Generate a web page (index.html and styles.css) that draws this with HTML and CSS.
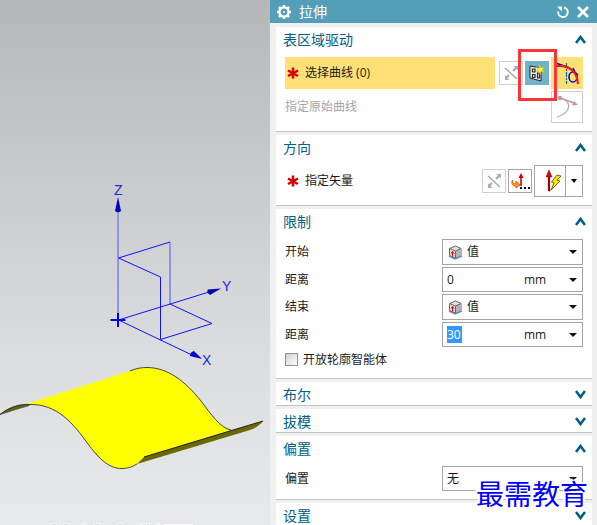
FILE: index.html
```html
<!DOCTYPE html>
<html lang="zh-CN">
<head>
<meta charset="utf-8">
<title>拉伸</title>
<link rel="stylesheet" href="styles.css">
</head>
<body>
<svg class="defs" width="0" height="0" aria-hidden="true">
  <symbol id="up" viewBox="0 0 11 9"><path d="M1 8 5.500 2 10 8" fill="none" stroke="#005f87" stroke-width="2.600"/></symbol>
  <symbol id="down" viewBox="0 0 11 9"><path d="M1 1 5.500 7 10 1" fill="none" stroke="#005f87" stroke-width="2.600"/></symbol>
  <symbol id="star" viewBox="0 0 12 12"><path d="M6 0.500V11.500M1 3.500 11 9M1 9 11 3.500" fill="none" stroke="#d80000" stroke-width="2.500"/></symbol>
  <symbol id="reverse" viewBox="0 0 22 22"><path d="M5 6 17 17" stroke="#a8a8a8" stroke-width="1.500"/><path d="M13 9 16 6M9 13 6 16" stroke="#a9a9cc" stroke-width="2.400"/><path d="M18 4V8.500L13.500 4ZM5 18V13.500L9.500 18Z" fill="#a9a9cc"/></symbol>
  <symbol id="cube" viewBox="0 0 15 15"><path d="M1 11 7 14 14 11" fill="none" stroke="#6b95d8" stroke-width="1.500"/><path d="M1.500 3.500 7.500 1 13 3.500V10.500L7.500 13 1.500 10.500Z" fill="#e2e2e2" stroke="#666"/><path d="M7.500 6 13 3.500V10.500L7.500 13Z" fill="#b4b4b4"/><path d="M1.500 3.500 7.500 6 13 3.500M7.500 6V13" fill="none" stroke="#666"/><path d="M4.500 11.500V6.500M3 8.500 4.500 6.500 6 8.500" fill="none" stroke="#e00000"/></symbol>
</svg>
<main class="app">
  <div class="viewport">
    <svg class="scene" viewBox="0 0 270 525" role="img" aria-label="坐标系与曲面">
      <path d="M0 414.500C9 407 20 403.500 30 404.500L28 406C20 408 8 412 0 414.500Z" fill="#6b6800" stroke="#333" stroke-width=".6"/>
      <path d="M26 404 130 371C137 368 142 367.500 148 367.500C168 368 185 381 201 401C211 414 220 428 231 430L144 457C137 464 132 468 122 468.500C108 469 97 456 88 444C73 423 57 403 26 404Z" fill="#ff0"/>
      <path d="M130 371C137 368 142 367.500 148 367.500C168 368 185 381 201 401C211 414 220 428 231 430M0 414.500C10 407 20 404.500 30 404.500C57 404 73 423 88 444C97 456 108 469 122 468.500C130 468.500 135 465 137 464" fill="none" stroke="#333" stroke-width=".9"/>
      <path d="M144 457 263 421C260 425 256 428 250 430L137 464Z" fill="#6b6800"/>
      <path d="M144 457 263 421" stroke="#222"/>
      <path d="M118 320V211" stroke="#9292f2" stroke-width="2"/>
      <path d="M170 304V242" stroke="#9292f2" stroke-width="2"/>
      <path d="M170 242 118.500 258 160.500 277V339.500L212 323.500 170 304M118.500 320 209 292M118.500 320 192 355" fill="none" stroke="#11f"/>
      <path d="M110.500 320H125.500M118 313V327" stroke="#00f" stroke-width="2"/>
      <path d="M118 197 121 211Q118 213.500 115 211Z" fill="#0000c8"/>
      <path d="M221 288.500 210 295Q206 292 208 289.500Z" fill="#0000b0"/>
      <path d="M202 359 190 356Q190 352 194 351Z" fill="#0000d8"/>
      <g class="axis"><text x="114" y="195">Z</text><text x="222" y="291">Y</text><text x="202" y="365">X</text></g>
      <path d="M51 524H57M63 524H69M81 524H86M94 524H100M117 524H123M139 524H143M146 524H150M155 524H160M164 524.500H193" stroke="#fff"/>
      <path d="M52 525H56M64 525H68M95 525H99M118 525H122M147 525H149" stroke="#a9c8dc"/>
    </svg>
  </div>
  <section class="dialog">
    <header class="titlebar">
      <svg width="16" height="16" viewBox="0 0 16 16"><circle cx="8" cy="8" r="4.600" fill="none" stroke="#fff" stroke-width="2.400"/><path d="M8 1V3.500M8 12.500V15M1 8H3.500M12.500 8H15M3 3 4.700 4.700M11.300 11.300 13 13M3 13 4.700 11.300M11.300 4.700 13 3" stroke="#fff" stroke-width="2.600"/><circle cx="8" cy="8" r="1" fill="#fff"/></svg>
      <h1>拉伸</h1>
      <button class="bar-button" aria-label="重置"><svg width="14" height="14" viewBox="0 0 14 14"><path d="M8 2.500A4.800 4.800 0 1 1 2.200 6.500" fill="none" stroke="#fff" stroke-width="2"/><path d="M1 1.500H6V6.500Z" fill="#fff"/></svg></button>
      <button class="bar-button" aria-label="关闭"><svg width="12" height="12" viewBox="0 0 12 12"><path d="M1 1 11 11M11 1 1 11" stroke="#fff" stroke-width="2.600"/></svg></button>
    </header>
    <div class="groups">
      <section class="group">
        <button class="group-head">表区域驱动<svg width="11" height="9"><use href="#up"/></svg></button>
        <div class="group-body">
          <div class="row tall">
            <div class="pick active"><svg width="12" height="12"><use href="#star"/></svg>选择曲线 (0)</div>
            <button class="tool faint" aria-label="反向"><svg width="22" height="22"><use href="#reverse"/></svg></button>
            <div class="marked">
              <button class="tool section-tool" aria-label="绘制截面"><svg width="24" height="24" viewBox="0 0 24 24"><path d="M5 5 16 7V20L5 17Z" fill="#f4f4ec" stroke="#222"/><path d="M7.500 8H10V11H7.500ZM7.500 13.500H10V16.500H7.500ZM12.500 12H14.500V17H12.500ZM12 9.500H15" fill="none" stroke="#222" stroke-width="1.200"/><path d="M15 4 16.200 7 19.500 6 17.500 8.700 19.500 11.500 16.300 10.600 15 13.500 14 10.500 11 11 12.800 8.700 11 6 14 7Z" fill="#ffec5a" stroke="#c9a800" stroke-width=".5"/></svg></button>
              <span class="callout"></span>
            </div>
            <button class="tool big curve-tool" aria-label="曲线"><svg width="32" height="32" viewBox="0 0 32 32"><path d="M15.500 6V27" stroke="#007080" stroke-width="1.200" stroke-dasharray="5 1 2 1"/><path d="M6 6.500C15 9 21 12 27 18M22 11 24 15" fill="none" stroke="#0000e0" stroke-width="1.600"/><ellipse cx="22" cy="20" rx="4" ry="5" fill="none" stroke="#0000e0" stroke-width="1.600"/><path d="M6 9C18 8 26 14 27 27" fill="none" stroke="#f02000" stroke-width="2.200"/></svg></button>
          </div>
          <div class="row tall">
            <span class="label disabled">指定原始曲线</span>
            <button class="tool big faint" aria-label="原始曲线" disabled><svg width="30" height="30" viewBox="0 0 30 30"><path d="M8 6C20 9 20 20 5 25" fill="none" stroke="#aaa" stroke-width="1.200"/><path d="M8 6 22 11" stroke="#c49a9a" stroke-width="1.500"/><circle cx="8" cy="6" r="2.300" fill="#c49a9a"/><path d="M26 13 20 13.500 22 9Z" fill="#c49a9a"/></svg></button>
          </div>
        </div>
      </section>
      <section class="group">
        <button class="group-head">方向<svg width="11" height="9"><use href="#up"/></svg></button>
        <div class="group-body">
          <div class="row tall">
            <div class="pick"><svg width="12" height="12"><use href="#star"/></svg>指定矢量</div>
            <button class="tool faint" aria-label="反向"><svg width="22" height="22"><use href="#reverse"/></svg></button>
            <button class="tool" aria-label="矢量对话框"><svg width="22" height="22" viewBox="0 0 22 22"><path d="M12 16V7" stroke="#d00000" stroke-width="1.600"/><path d="M12 3 14.500 8H9.500Z" fill="#d00000"/><path d="M3.500 10C3 13 5 14 7 13V11L11 15 7 18V16C3 16.500 2 13 3.500 10Z" fill="#ff9a28" stroke="#d04800" stroke-width=".7"/><path d="M11 18H13M15 18H17M19 18H21" stroke="#111" stroke-width="2"/></svg></button>
            <div class="split">
              <button class="tool big" aria-label="自动判断的矢量"><svg width="30" height="30" viewBox="0 0 30 30"><path d="M14 26 25 15" stroke="#999"/><path d="M14 25V9" stroke="#a00000" stroke-width="2.200"/><path d="M14 4 17 11H11Z" fill="#e00000" stroke="#900" stroke-width=".5"/><path d="M22 9 26 10 22 14 25 15 16 24 19 17 16.500 16Z" fill="#ffe600" stroke="#554600" stroke-width=".8"/></svg></button>
              <button class="tool more" aria-label="更多矢量"><svg width="6" height="4" viewBox="0 0 6 4"><path d="M0 0H6L3 4Z"/></svg></button>
            </div>
          </div>
        </div>
      </section>
      <section class="group">
        <button class="group-head">限制<svg width="11" height="9"><use href="#up"/></svg></button>
        <div class="group-body">
          <div class="row"><label class="label" for="start">开始</label><div class="field choice"><svg width="15" height="15"><use href="#cube"/></svg><select id="start"><option>值</option></select></div></div>
          <div class="row"><label class="label" for="d1">距离</label><div class="field amount"><input id="d1" type="text" value="0"><select class="unit" aria-label="单位"><option>mm</option></select></div></div>
          <div class="row"><label class="label" for="end">结束</label><div class="field choice"><svg width="15" height="15"><use href="#cube"/></svg><select id="end"><option>值</option></select></div></div>
          <div class="row"><label class="label" for="d2">距离</label><div class="field amount"><input id="d2" class="selected" type="text" value="30"><select class="unit" aria-label="单位"><option>mm</option></select></div></div>
          <label class="check"><input type="checkbox">开放轮廓智能体</label>
        </div>
      </section>
      <section class="group"><button class="group-head">布尔<svg width="11" height="9"><use href="#down"/></svg></button></section>
      <section class="group"><button class="group-head">拔模<svg width="11" height="9"><use href="#down"/></svg></button></section>
      <section class="group">
        <button class="group-head">偏置<svg width="11" height="9"><use href="#up"/></svg></button>
        <div class="group-body">
          <div class="row"><label class="label" for="offset">偏置</label><div class="field"><select id="offset"><option>无</option></select></div></div>
        </div>
      </section>
      <section class="group"><button class="group-head">设置<svg width="11" height="9"><use href="#down"/></svg></button></section>
    </div>
  </section>
  <div class="watermark">最需教育</div>
</main>
</body>
</html>
```
FILE: styles.css
```css
* { box-sizing: border-box; }
body {
  margin: 0;
  font: 12px/16px "Open Sans", "Noto Sans CJK SC", sans-serif;
  color: #1a1a1a;
}
button, input, select { font: inherit; color: inherit; margin: 0; padding: 0; border: 0; background: none; }
svg { display: block; flex: none; }
.defs { position: absolute; }
.app {
  position: relative;
  display: grid;
  grid-template-columns: minmax(0, 270fr) minmax(0, 327fr);
  height: 100vh;
  overflow: hidden;
}
.viewport { background: linear-gradient(#b6b7b9, #c8c9ca 32%, #dcddde 68%, #e7e9ea); overflow: hidden; }
.scene { width: 100%; height: 100%; }
.axis { font: 14px "Liberation Sans", sans-serif; fill: #2222f0; }
.dialog { background: #f0f0f0; overflow: hidden; }
.titlebar {
  display: flex;
  align-items: center;
  gap: 7px;
  height: 23px;
  padding: 0 8px 0 6px;
  background: #539fb7;
  color: #fff;
}
.titlebar h1 { flex: 1; margin: 0; font-size: 14px; line-height: 20px; font-weight: 400; }
.groups { display: flex; flex-direction: column; gap: 3px; padding: 4px 5px 0 6px; }
.group { background: #fff; border-bottom: 1px solid #c3c3c3; }
.group-head {
  display: flex;
  align-items: center;
  justify-content: space-between;
  width: 100%;
  height: 23px;
  padding: 2px 6px 0 7px;
  font-size: 14px;
  line-height: 20px;
  color: #005f87;
}
.group-body { display: flex; flex-direction: column; gap: 2px; padding: 7px 9px 8px; }
.row { display: flex; align-items: center; gap: 2px; }
.tall { height: 32px; }
.label { flex: 1; }
.disabled { color: #a5a5a5; }
.pick { display: flex; flex: 1; align-items: center; gap: 6px; height: 32px; padding-left: 2px; margin-right: 2px; }
.active { background: #ffe076; }
.tool { display: grid; place-items: center; width: 24px; height: 24px; border: 1px solid #a5a5a5; background: #fff; }
.faint { border-color: #cfcfcf; }
.big { width: 32px; height: 32px; }
.marked { position: relative; }
.section-tool { border: 0; background: #73b3c9; }
.curve-tool { border: 0; background: #ffe076; }
.callout { position: absolute; z-index: 1; inset: -12px -8px -16px -7px; border: 3px solid #ff3535; pointer-events: none; }
.split { display: flex; }
.more { width: 17px; height: 32px; border-left: 0; }
.field { position: relative; display: flex; align-items: center; width: 141px; height: 25px; border: 1px solid #a5a5a5; background: #fff; }
.field::after {
  content: "";
  position: absolute;
  right: 5px;
  top: 10px;
  border: 4px solid transparent;
  border-top-color: #111;
  border-bottom: 0;
  pointer-events: none;
}
.field select { flex: 1; min-width: 0; height: 100%; padding-left: 4px; appearance: none; }
.choice { height: 26px; padding-left: 5px; }
.amount { justify-content: space-between; padding-left: 4px; }
.amount input { width: 60px; height: 17px; }
.amount .selected { width: 15px; background: #3399ff; color: #fff; }
.amount .unit { flex: 0 0 62px; }
.check { display: flex; align-items: center; gap: 5px; height: 21px; }
.check input { appearance: none; width: 13px; height: 13px; border: 1px solid #8e8f8f; background: linear-gradient(135deg, #ccd0d5, #fff); }
.watermark {
  position: absolute;
  right: 9px;
  bottom: 12px;
  font: 400 28px/40px "Noto Sans CJK SC", serif;
  color: #00f;
  text-shadow: 1px 0 #fff, -1px 0 #fff, 0 1px #fff, 0 -1px #fff, 2px 2px #fff, -2px -2px #fff, 2px -2px #fff, -2px 2px #fff;
}
```
